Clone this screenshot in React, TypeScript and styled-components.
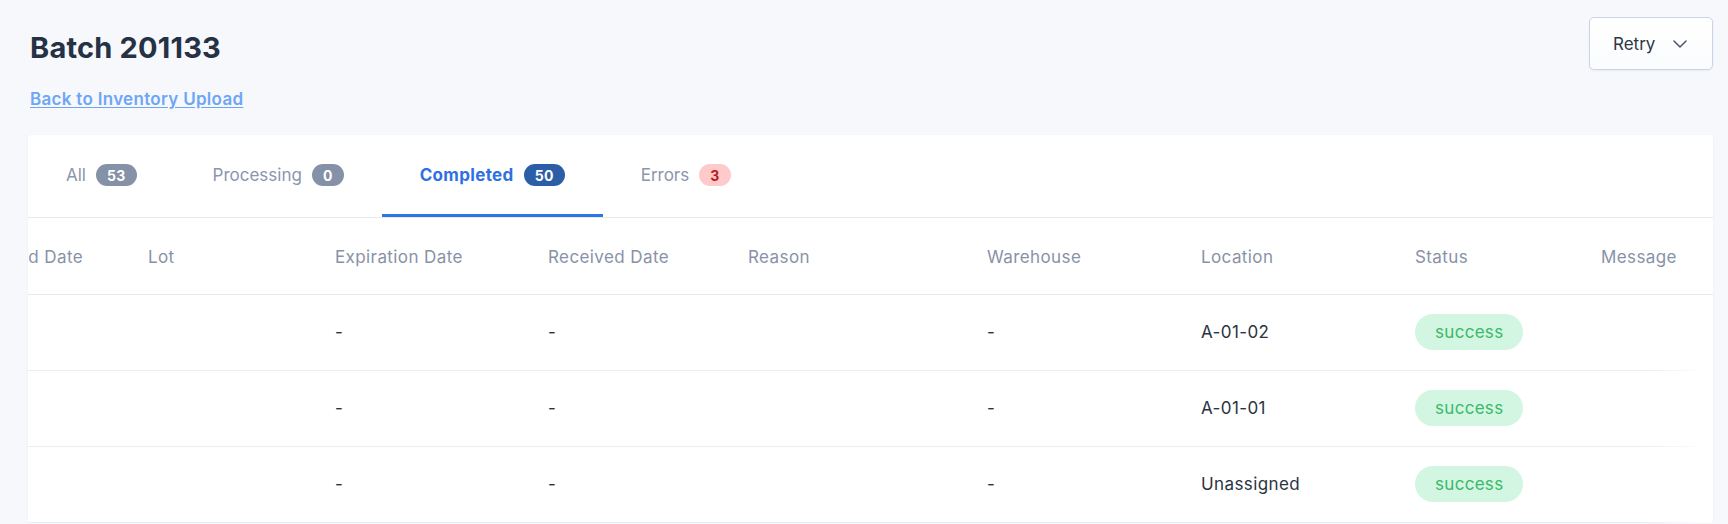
import React, { useLayoutEffect, useRef } from 'react'
import styled, { createGlobalStyle } from 'styled-components'
import { ChevronDown } from 'lucide-react'

const GlobalStyle = createGlobalStyle`
  html, body {
    margin: 0;
    background: #f7f8fb;
    font-family: Inter, "Noto Sans", sans-serif;
    -webkit-font-smoothing: antialiased;
  }
  * { box-sizing: border-box; }
`

const Page = styled.div`
  padding: 17px 15px 0 28px;
`

const TopRow = styled.div`
  display: flex;
  justify-content: space-between;
  align-items: flex-start;
`

const TitleBlock = styled.div`
  display: flex;
  flex-direction: column;
  align-items: flex-start;
  padding: 13px 0 0 2px;
`

const Title = styled.h1`
  margin: 0;
  font-size: 29px;
  line-height: 35px;
  font-weight: 700;
  color: #253246;
  letter-spacing: 0.2px;
`

const BackLink = styled.a`
  margin-top: 22px;
  font-size: 17px;
  line-height: 24px;
  font-weight: 600;
  color: #6ea6f7;
  letter-spacing: 0.3px;
  text-decoration: underline;
  text-underline-offset: 2px;
  cursor: pointer;
`

const RetryButton = styled.button`
  display: flex;
  align-items: center;
  gap: 13px;
  height: 53px;
  width: 124px;
  padding: 0 21px 0 23px;
  background: linear-gradient(#ffffff, #fbfcfe);
  border: 1px solid #c9d4e8;
  border-radius: 5px;
  box-shadow: 0 1px 2px rgba(30, 50, 90, 0.06);
  font-family: inherit;
  font-size: 17px;
  color: #2d3748;
  cursor: pointer;
  svg { color: #4a5568; flex: none; }
`

const Card = styled.div`
  margin-top: 24px;
  background: #fff;
  border-radius: 3px;
  box-shadow: 0 1px 3px rgba(20, 40, 80, 0.05);
  overflow: hidden;
`

const TabBar = styled.div`
  display: flex;
  height: 83px;
  border-bottom: 1px solid #e6e9f0;
`

const Tab = styled.div<{ $active?: boolean }>`
  display: flex;
  align-items: center;
  gap: 10px;
  padding: 1px 38px 0;
  border-bottom: 3px solid ${p => (p.$active ? '#2f74e6' : 'transparent')};
  font-size: 17px;
  font-weight: ${p => (p.$active ? 700 : 400)};
  letter-spacing: ${p => (p.$active ? '0.35px' : '0')};
  color: ${p => (p.$active ? '#2f6fe4' : '#8a96ad')};
  cursor: pointer;
`

const tones = {
  gray: { bg: '#8491a7', fg: '#fff' },
  blue: { bg: '#2c5ea8', fg: '#fff' },
  red: { bg: '#fecaca', fg: '#b91c1c' },
}

const Count = styled.span<{ $tone: keyof typeof tones }>`
  display: inline-flex;
  align-items: center;
  justify-content: center;
  height: 22px;
  min-width: 30px;
  padding: 0 11px;
  border-radius: 11px;
  font-size: 14px;
  font-weight: 700;
  letter-spacing: 0.3px;
  background: ${p => tones[p.$tone].bg};
  color: ${p => tones[p.$tone].fg};
`

const TableArea = styled.div`
  position: relative;
`

const Scroller = styled.div`
  overflow-x: auto;
  scrollbar-width: none;
  &::-webkit-scrollbar { display: none; }
`

const Table = styled.table`
  border-collapse: collapse;
  table-layout: fixed;
  width: 2151px;
`

const Th = styled.th`
  height: 76px;
  padding: 3px 20px 0;
  text-align: left;
  font-size: 17px;
  font-weight: 400;
  letter-spacing: 0.4px;
  color: #8792a8;
  white-space: nowrap;
  border-bottom: 1px solid #e6e9f0;
`

const Td = styled.td`
  height: 76px;
  padding: 0 20px;
  font-size: 17px;
  letter-spacing: 0.4px;
  color: #2a3342;
  white-space: nowrap;
  border-bottom: 1px solid #e9ecf2;
`

const Status = styled.span`
  display: inline-flex;
  align-items: center;
  height: 36px;
  padding: 0 20px;
  border-radius: 18px;
  background: #d2f6e1;
  color: #3cb96a;
  font-size: 17px;
  letter-spacing: 0.3px;
`

const RightFade = styled.div`
  position: absolute;
  top: 78px;
  right: 0;
  bottom: 0;
  width: 72px;
  pointer-events: none;
  background: linear-gradient(to right, rgba(255, 255, 255, 0), #fff 90%);
`

const columns = [
  { key: 'sku', label: 'SKU', width: 200 },
  { key: 'qty', label: 'Quantity', width: 140 },
  { key: 'mfg', label: 'Manufactured Date', width: 226 },
  { key: 'lot', label: 'Lot', width: 187 },
  { key: 'exp', label: 'Expiration Date', width: 213 },
  { key: 'rec', label: 'Received Date', width: 200 },
  { key: 'reason', label: 'Reason', width: 239 },
  { key: 'wh', label: 'Warehouse', width: 214 },
  { key: 'loc', label: 'Location', width: 214 },
  { key: 'status', label: 'Status', width: 186 },
  { key: 'msg', label: 'Message', width: 132 },
]

const rows = [
  { sku: 'SKU-10482', qty: '24', mfg: '', lot: '', exp: '-', rec: '-', reason: '', wh: '-', loc: 'A-01-02', status: 'success', msg: '' },
  { sku: 'SKU-10483', qty: '12', mfg: '', lot: '', exp: '-', rec: '-', reason: '', wh: '-', loc: 'A-01-01', status: 'success', msg: '' },
  { sku: 'SKU-10484', qty: '8', mfg: '', lot: '', exp: '-', rec: '-', reason: '', wh: '-', loc: 'Unassigned', status: 'success', msg: '' },
]

const tabs = [
  { label: 'All', count: 53, tone: 'gray' as const },
  { label: 'Processing', count: 0, tone: 'gray' as const },
  { label: 'Completed', count: 50, tone: 'blue' as const, active: true },
  { label: 'Errors', count: 3, tone: 'red' as const },
]

const App = () => {
  const scroller = useRef<HTMLDivElement>(null)

  // table is shown scrolled all the way to the right
  useLayoutEffect(() => {
    const el = scroller.current
    if (el) el.scrollLeft = el.scrollWidth
  }, [])

  return (
    <>
      <GlobalStyle />
      <Page>
        <TopRow>
          <TitleBlock>
            <Title>Batch 201133</Title>
            <BackLink>Back to Inventory Upload</BackLink>
          </TitleBlock>
          <RetryButton>
            Retry
            <ChevronDown size={24} strokeWidth={1.5} />
          </RetryButton>
        </TopRow>
        <Card>
          <TabBar>
            {tabs.map(t => (
              <Tab key={t.label} $active={t.active}>
                {t.label}
                <Count $tone={t.tone}>{t.count}</Count>
              </Tab>
            ))}
          </TabBar>
          <TableArea>
            <Scroller ref={scroller}>
              <Table>
                <colgroup>
                  {columns.map(c => (
                    <col key={c.key} style={{ width: c.width }} />
                  ))}
                </colgroup>
                <thead>
                  <tr>
                    {columns.map(c => (
                      <Th key={c.key}>{c.label}</Th>
                    ))}
                  </tr>
                </thead>
                <tbody>
                  {rows.map((r, i) => (
                    <tr key={i}>
                      {columns.map(c => (
                        <Td key={c.key}>
                          {c.key === 'status' ? <Status>{r.status}</Status> : (r as Record<string, string>)[c.key]}
                        </Td>
                      ))}
                    </tr>
                  ))}
                </tbody>
              </Table>
            </Scroller>
            <RightFade />
          </TableArea>
        </Card>
      </Page>
    </>
  )
}

export default App
